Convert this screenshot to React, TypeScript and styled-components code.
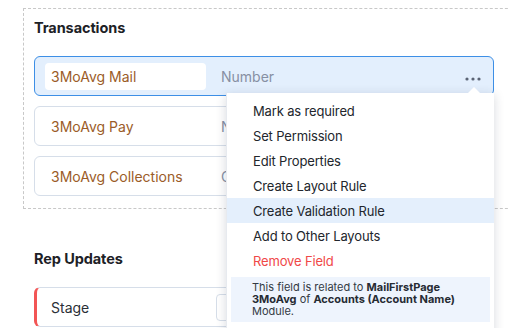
import React from 'react';
import styled, { createGlobalStyle } from 'styled-components';

const GlobalStyle = createGlobalStyle`
  html, body {
    margin: 0;
    padding: 0;
    background: #ffffff;
    overflow: hidden;
  }
  body {
    font-family: Inter, 'Noto Sans', sans-serif;
    color: #1f2329;
  }
`;

const Page = styled.div`
  position: relative;
  width: 508px;
  height: 328px;
  overflow: hidden;
  padding: 8px 0 0 23px;
  box-sizing: border-box;
`;

const Section = styled.section<{ $dashed?: boolean }>`
  width: 520px;
  box-sizing: border-box;
  border: 1px ${p => (p.$dashed ? 'dashed #c8c8c8' : 'solid transparent')};
  border-right: none;
  padding: ${p => (p.$dashed ? '9px 0 12px 10px' : '39px 0 0 10px')};
`;

const Title = styled.h3`
  margin: 0 0 18px;
  font-size: 14.5px;
  font-weight: 700;
  line-height: 20px;
  color: #1d2126;
  letter-spacing: -0.1px;
`;

const FieldList = styled.div`
  display: flex;
  flex-direction: column;
  gap: 10px;
`;

const FieldRow = styled.div<{ $active?: boolean; $required?: boolean }>`
  display: flex;
  align-items: center;
  width: 460px;
  height: 40px;
  box-sizing: border-box;
  padding: 0 10px;
  border: 1px solid ${p => (p.$active ? '#3d8fe6' : '#d6dee9')};
  border-left: ${p => (p.$required ? '3px solid #f25555' : undefined)};
  padding-left: ${p => (p.$required ? '8px' : '10px')};
  border-radius: 6px;
  background: ${p => (p.$active ? '#e3effd' : '#ffffff')};
`;

const LabelBox = styled.div<{ $active?: boolean }>`
  width: 161px;
  height: 27px;
  box-sizing: border-box;
  display: flex;
  align-items: center;
  padding-left: 6px;
  border-radius: 4px;
  background: ${p => (p.$active ? '#ffffff' : 'transparent')};
  font-size: 14px;
  color: #9b5c28;
`;

const PlainLabel = styled(LabelBox)`
  color: #2a2f36;
`;

const TypeText = styled.span`
  margin-left: 15px;
  font-size: 14px;
  color: #8790a3;
  flex: 1;
`;

const ValueBox = styled.div`
  margin-left: 10px;
  width: 120px;
  height: 27px;
  border: 1px solid #d6dee9;
  border-radius: 4px;
  box-sizing: border-box;
`;

const MoreButton = styled.div`
  display: flex;
  align-items: center;
  margin-right: 2px;
  margin-top: 6px;
`;

const Menu = styled.div`
  position: absolute;
  left: 226px;
  top: 93px;
  width: 268px;
  height: 250px;
  box-sizing: border-box;
  background: #ffffff;
  padding: 5px 0 0;
  box-shadow: 0 2px 10px rgba(40, 50, 70, 0.18);
  border-left: 1px solid #e7eaef;
`;

const MenuArrow = styled.div`
  position: absolute;
  top: -6px;
  right: 14px;
  width: 0;
  height: 0;
  border-left: 6px solid transparent;
  border-right: 6px solid transparent;
  border-bottom: 6px solid #ffffff;
`;

const MenuItem = styled.div<{ $hover?: boolean; $danger?: boolean }>`
  height: 25px;
  display: flex;
  align-items: center;
  padding-left: 26px;
  font-size: 13px;
  letter-spacing: -0.15px;
  color: ${p => (p.$danger ? '#f04848' : '#22262c')};
  background: ${p => (p.$hover ? '#e4effc' : 'transparent')};
`;

const InfoBox = styled.div`
  margin: 4px 4px 0;
  padding: 4px 0 5px 21px;
  background: #eef4fd;
  font-size: 11px;
  line-height: 12px;
  color: #333a44;

  b {
    font-weight: 700;
    color: #262b33;
  }
`;

const InfoLine = styled.div`
  height: 12px;
  white-space: nowrap;
`;

function Dots() {
  return (
    <svg width="16" height="4" viewBox="0 0 16 4">
      <circle cx="2" cy="2" r="1.6" fill="#5b6475" />
      <circle cx="8" cy="2" r="1.6" fill="#5b6475" />
      <circle cx="14" cy="2" r="1.6" fill="#5b6475" />
    </svg>
  );
}

const menuItems = [
  { label: 'Mark as required' },
  { label: 'Set Permission' },
  { label: 'Edit Properties' },
  { label: 'Create Layout Rule' },
  { label: 'Create Validation Rule', hover: true },
  { label: 'Add to Other Layouts' },
  { label: 'Remove Field', danger: true },
];

export default function App() {
  return (
    <>
      <GlobalStyle />
      <Page>
        <Section $dashed>
          <Title>Transactions</Title>
          <FieldList>
            <FieldRow $active>
              <LabelBox $active>3MoAvg Mail</LabelBox>
              <TypeText>Number</TypeText>
              <MoreButton>
                <Dots />
              </MoreButton>
            </FieldRow>
            <FieldRow>
              <LabelBox>3MoAvg Pay</LabelBox>
              <TypeText>Number</TypeText>
            </FieldRow>
            <FieldRow>
              <LabelBox>3MoAvg Collections</LabelBox>
              <TypeText>Currency</TypeText>
            </FieldRow>
          </FieldList>
        </Section>

        <Section>
          <Title>Rep Updates</Title>
          <FieldList>
            <FieldRow $required>
              <PlainLabel>Stage</PlainLabel>
              <ValueBox />
            </FieldRow>
          </FieldList>
        </Section>

        <Menu>
          <MenuArrow />
          {menuItems.map(item => (
            <MenuItem key={item.label} $hover={item.hover} $danger={item.danger}>
              {item.label}
            </MenuItem>
          ))}
          <InfoBox>
            <InfoLine>
              This field is related to <b>MailFirstPage</b>
            </InfoLine>
            <InfoLine>
              <b>3MoAvg</b> of <b>Accounts (Account Name)</b>
            </InfoLine>
            <InfoLine>Module.</InfoLine>
          </InfoBox>
        </Menu>
      </Page>
    </>
  );
}
